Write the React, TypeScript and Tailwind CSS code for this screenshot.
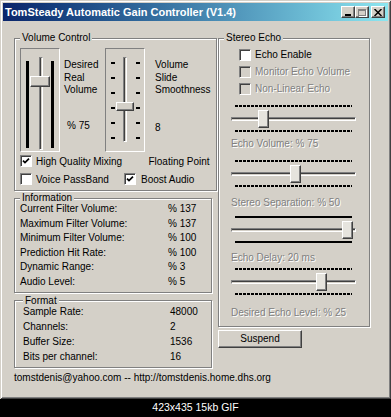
import React from 'react';

const raised =
  'border border-t-white border-l-white border-r-[#404040] border-b-[#404040] shadow-[inset_-1px_-1px_0_#808080]';
const sunken = 'border border-t-[#808080] border-l-[#808080] border-r-white border-b-white';
const grayText = 'text-[#808080] [text-shadow:1px_1px_0_#fff]';

const Check: React.FC<{ checked?: boolean; disabled?: boolean }> = ({ checked, disabled }) => (
  <div
    className={`relative w-[12px] h-[12px] shrink-0 ${sunken} shadow-[inset_1px_1px_0_#404040] ${
      disabled ? 'bg-[#d4d0c8]' : 'bg-white'
    }`}
  >
    {checked && (
      <svg viewBox="0 0 10 10" className="absolute inset-0 w-full h-full">
        <polyline points="2,4.6 4,6.6 8,2.6" fill="none" stroke="#000" strokeWidth="1.7" />
      </svg>
    )}
  </div>
);

const Group: React.FC<{ title: string; className?: string; children: React.ReactNode }> = ({
  title,
  className = '',
  children,
}) => (
  <fieldset
    className={`border border-[#808080] shadow-[inset_1px_1px_0_#fff,1px_1px_0_#fff] px-[5px] ${className}`}
  >
    <legend className="px-[2px] bg-[#d4d0c8] leading-[12px]">{title}</legend>
    {children}
  </fieldset>
);

const Ticks: React.FC<{ solid?: boolean }> = ({ solid }) => (
  <div
    className={`ml-[4px] w-[117px] h-[2px] ${
      solid
        ? 'bg-black'
        : 'bg-[repeating-linear-gradient(90deg,#000_0_3px,transparent_3px_4px)]'
    }`}
  />
);

const HSlider: React.FC<{ pos: number; solid?: boolean; className?: string }> = ({
  pos,
  solid,
  className = '',
}) => (
  <div className={`relative ml-[7px] w-[125px] h-[28px] flex flex-col ${className}`}>
    <Ticks solid={solid} />
    <div className={`mt-[10px] h-[4px] ${sunken} shadow-[inset_0_1px_0_#404040] bg-[#d4d0c8]`} />
    <div className="mt-[9px]">
      <Ticks solid={solid} />
    </div>
    <div
      className={`absolute top-[5px] w-[11px] h-[18px] bg-[#e6e4de] ${raised}`}
      style={{ left: pos }}
    />
  </div>
);

const Label: React.FC<{ className?: string; children: React.ReactNode }> = ({
  className = '',
  children,
}) => <div className={`ml-[7px] h-[14px] leading-[14px] ${grayText} ${className}`}>{children}</div>;

const CheckRow: React.FC<{ checked?: boolean; disabled?: boolean; label: string }> = ({
  checked,
  disabled,
  label,
}) => (
  <div className="flex items-center h-[17px] ml-[15px]">
    <Check checked={checked} disabled={disabled} />
    <span className={`ml-[4px] ${disabled ? grayText : ''}`}>{label}</span>
  </div>
);

const TitleButton: React.FC<{ children: React.ReactNode; className?: string }> = ({
  children,
  className = '',
}) => (
  <div
    className={`w-[14px] h-[12px] bg-[#d4d0c8] flex items-center justify-center ${raised} ${className}`}
  >
    {children}
  </div>
);

const App: React.FC = () => {
  const info: [string, string][] = [
    ['Current Filter Volume:', '% 137'],
    ['Maximum Filter Volume:', '% 137'],
    ['Minimum Filter Volume:', '% 100'],
    ['Prediction Hit Rate:', '% 100'],
    ['Dynamic Range:', '% 3'],
    ['Audio Level:', '% 5'],
  ];
  const format: [string, string][] = [
    ['Sample Rate:', '48000'],
    ['Channels:', '2'],
    ['Buffer Size:', '1536'],
    ['Bits per channel:', '16'],
  ];

  return (
    <div className="w-[391px] h-[417px] bg-black flex flex-col font-['Liberation_Sans',Arial,sans-serif] text-[10px] text-black">
      {/* window */}
      <div className="w-[391px] h-[399px] bg-[#d4d0c8] shadow-[inset_1px_1px_0_#d4d0c8,inset_-1px_-1px_0_#404040,inset_2px_2px_0_#fff,inset_-2px_-2px_0_#808080] flex flex-col px-[3px] pt-[3px]">
        {/* title bar */}
        <div className="h-[18px] flex items-center bg-linear-to-r from-[#0a246a] to-[#8ce6f0] pl-[2px] pr-[3px]">
          <span className="text-white font-bold text-[11px] leading-[18px]">
            TomSteady Automatic Gain Controller (V1.4)
          </span>
          <div className="ml-auto flex items-center">
            <TitleButton>
              <div className="w-[6px] h-[2px] bg-black mt-[5px]" />
            </TitleButton>
            <TitleButton>
              <div className="w-[8px] h-[7px] border border-[#808080] border-t-2 shadow-[1px_1px_0_#fff]" />
            </TitleButton>
            <TitleButton className="ml-[2px]">
              <svg viewBox="0 0 8 7" className="w-[8px] h-[7px]">
                <path d="M0.5 0 L7.5 7 M7.5 0 L0.5 7" stroke="#000" strokeWidth="1.5" />
              </svg>
            </TitleButton>
          </div>
        </div>

        {/* body */}
        <div className="flex pl-[11px] pt-[11px] gap-[6px]">
          {/* left column */}
          <div className="w-[198px] flex flex-col">
            <Group title="Volume Control" className="pb-[2px]">
              <div className="mt-[4px] flex items-start">
                {/* slider 1 */}
                <div className={`relative w-[40px] h-[104px] shrink-0 ${sunken}`}>
                  <div className="flex pl-[5px]">
                    <div className="w-[3px] h-[87px] mt-[12px] bg-black" />
                    <div
                      className={`ml-[10px] w-[4px] h-[93px] mt-[8px] ${sunken} shadow-[inset_1px_0_0_#404040]`}
                    />
                    <div className="ml-[8px] w-[3px] h-[87px] mt-[12px] bg-black" />
                  </div>
                  <div className={`absolute left-[9px] top-[27px] w-[20px] h-[11px] bg-[#d4d0c8] ${raised}`} />
                </div>
                <div className="w-[41px] ml-[4px] pt-[11px] flex flex-col leading-[12.5px]">
                  <span>Desired</span>
                  <span>Real</span>
                  <span>Volume</span>
                  <span className="mt-[23px] pl-[3px]">% 75</span>
                </div>
                {/* slider 2 */}
                <div className={`relative w-[40px] h-[104px] shrink-0 ${sunken}`}>
                  <div className="flex pl-[5px]">
                    <div className="w-[4px] pt-[13px] flex flex-col gap-[13px]">
                      {[0, 1, 2, 3, 4, 5].map((i) => (
                        <div key={i} className="h-[2px] bg-black" />
                      ))}
                    </div>
                    <div
                      className={`ml-[8px] w-[4px] h-[85px] mt-[8px] ${sunken} shadow-[inset_1px_0_0_#404040]`}
                    />
                    <div className="ml-[9px] w-[4px] pt-[13px] flex flex-col gap-[13px]">
                      {[0, 1, 2, 3, 4, 5].map((i) => (
                        <div key={i} className="h-[2px] bg-black" />
                      ))}
                    </div>
                  </div>
                  <div className={`absolute left-[10px] top-[53px] w-[18px] h-[9px] bg-[#d4d0c8] ${raised}`} />
                </div>
                <div className="ml-[10px] pt-[11px] flex flex-col leading-[12.5px]">
                  <span>Volume</span>
                  <span>Slide</span>
                  <span>Smoothness</span>
                  <span className="mt-[25px]">8</span>
                </div>
              </div>
              <div className="flex items-center h-[18px] pr-[1px]">
                <Check checked />
                <span className="ml-[4px]">High Quality Mixing</span>
                <span className="ml-auto">Floating Point</span>
              </div>
              <div className="flex items-center h-[18px]">
                <div className="w-[104px] flex items-center">
                  <Check />
                  <span className="ml-[4px]">Voice PassBand</span>
                </div>
                <Check checked />
                <span className="ml-[5px]">Boost Audio</span>
              </div>
            </Group>

            <Group title="Information" className="mt-[1px] pb-[2px]">
              <div className="-mt-[2px] grid grid-cols-[148px_1fr] leading-[14.6px]">
                {info.map(([k, v]) => (
                  <React.Fragment key={k}>
                    <span>{k}</span>
                    <span>{v}</span>
                  </React.Fragment>
                ))}
              </div>
            </Group>

            <Group title="Format" className="mt-[2px] pb-[2px] pl-[8px]">
              <div className="-mt-[3px] grid grid-cols-[147px_1fr] leading-[15.3px]">
                {format.map(([k, v]) => (
                  <React.Fragment key={k}>
                    <span>{k}</span>
                    <span>{v}</span>
                  </React.Fragment>
                ))}
              </div>
            </Group>
          </div>

          {/* right column */}
          <div className="w-[152px] flex flex-col">
            <Group title="Stereo Echo" className="pb-[6px]">
              <div className="mt-[2px]">
                <CheckRow label="Echo Enable" />
                <CheckRow label="Monitor Echo Volume" disabled />
                <CheckRow label="Non-Linear Echo" disabled />
              </div>
              <HSlider pos={27} className="mt-[8px]" />
              <Label className="mt-[4px]">Echo Volume: % 75</Label>
              <HSlider pos={59} className="mt-[9px]" />
              <Label className="mt-[8px]">Stereo Separation: % 50</Label>
              <HSlider pos={111} solid className="mt-[6px]" />
              <Label className="mt-[7px]">Echo Delay: 20 ms</Label>
              <HSlider pos={85} className="mt-[3px]" />
              <Label className="mt-[10px]">Desired Echo Level: % 25</Label>
            </Group>
            <button
              className={`mt-[3px] w-[84px] h-[18px] bg-[#d4d0c8] text-[10px] leading-[16px] text-center ${raised}`}
            >
              Suspend
            </button>
          </div>
        </div>

        <div className="mt-[4px] pl-[11px] leading-[12px]">
          tomstdenis@yahoo.com -- http://tomstdenis.home.dhs.org
        </div>
      </div>

      {/* viewer caption */}
      <div className="flex-1 flex items-center justify-center text-white text-[10.5px]">
        423x435 15kb GIF
      </div>
    </div>
  );
};

export default App;
